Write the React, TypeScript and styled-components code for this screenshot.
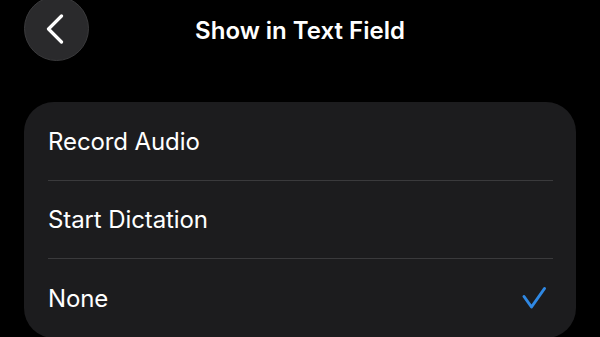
import styled, { createGlobalStyle } from 'styled-components'

const Global = createGlobalStyle`
  html, body {
    margin: 0;
    padding: 0;
    background: #000;
  }
  body {
    font-family: 'Inter', 'Liberation Sans', sans-serif;
    color: #fff;
    overflow: hidden;
  }
`

const options = [
  { label: 'Record Audio', selected: false },
  { label: 'Start Dictation', selected: false },
  { label: 'None', selected: true },
]

export default function App() {
  return (
    <>
      <Global />
      <Screen>
        <Header>
          <BackButton aria-label="Back">
            <svg width="18" height="30" viewBox="0 0 18 30" fill="none">
              <path d="M15.5 2 L2.5 15 L15.5 28" stroke="#fff" strokeWidth="3.2" strokeLinecap="round" strokeLinejoin="round" />
            </svg>
          </BackButton>
          <Title>Show in Text Field</Title>
          <span />
        </Header>
        <Card>
          {options.map((o, i) => (
            <Row key={o.label} last={i === options.length - 1}>
              <Label>{o.label}</Label>
              {o.selected && (
                <svg width="26" height="24" viewBox="0 0 26 24" fill="none">
                  <path d="M3 10.5 L10.5 21 L23.5 2.5" stroke="#2f88e3" strokeWidth="3" strokeLinecap="round" strokeLinejoin="round" />
                </svg>
              )}
            </Row>
          ))}
        </Card>
      </Screen>
    </>
  )
}

const Screen = styled.div`
  width: 600px;
  height: 337px;
  background: #000;
  overflow: hidden;
`

const Header = styled.header`
  display: grid;
  grid-template-columns: 1fr auto 1fr;
  align-items: center;
  padding: 0 24px;
  height: 61px;
  margin-top: -4px;
`

const BackButton = styled.button`
  width: 65px;
  height: 65px;
  border-radius: 50%;
  background: #2a2a2c;
  border: 1px solid #3a3a3c;
  box-sizing: border-box;
  display: flex;
  align-items: center;
  justify-content: center;
  padding: 0 4px 0 0;
  cursor: pointer;
`

const Title = styled.h1`
  margin: 4px 0 0;
  font-size: 24px;
  font-weight: 600;
  color: #fff;
`

const Card = styled.section`
  margin: 45px 24px 0;
  background: #1c1c1e;
  border-radius: 30px;
  height: 236px;
`

const Row = styled.div<{ last?: boolean }>`
  display: flex;
  align-items: center;
  justify-content: space-between;
  box-sizing: border-box;
  height: ${(p) => (p.last ? '78px' : '79px')};
  margin: 0 23px 0 24px;
  padding-right: 6px;
  border-bottom: ${(p) => (p.last ? 'none' : '1px solid #3a3a3c')};
  &:nth-child(2) {
    height: 78px;
  }
`

const Label = styled.span`
  font-size: 24px;
  font-weight: 400;
  letter-spacing: -0.1px;
  color: #fff;
`
